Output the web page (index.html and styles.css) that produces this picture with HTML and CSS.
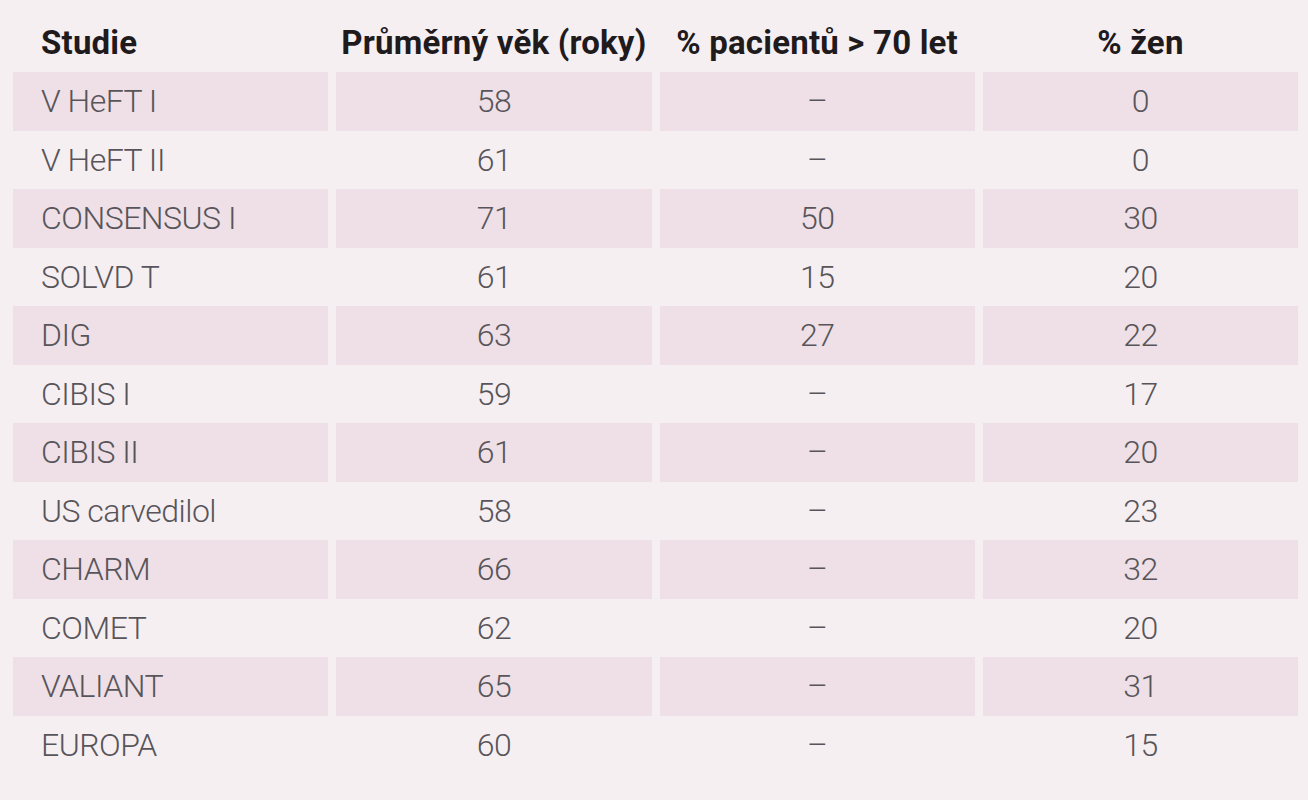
FILE: index.html
```html
<!DOCTYPE html>
<html lang="cs">
<head>
<meta charset="utf-8">
<link rel="stylesheet" href="styles.css">
</head>
<body>
<div class="table">
  <div class="row head">
    <div class="cell first">Studie</div>
    <div class="cell">Průměrný věk (roky)</div>
    <div class="cell">% pacientů &gt; 70 let</div>
    <div class="cell">% žen</div>
  </div>
  <div class="row shade"><div class="cell first">V HeFT I</div><div class="cell">58</div><div class="cell">–</div><div class="cell">0</div></div>
  <div class="row"><div class="cell first">V HeFT II</div><div class="cell">61</div><div class="cell">–</div><div class="cell">0</div></div>
  <div class="row shade"><div class="cell first">CONSENSUS I</div><div class="cell">71</div><div class="cell">50</div><div class="cell">30</div></div>
  <div class="row"><div class="cell first">SOLVD T</div><div class="cell">61</div><div class="cell">15</div><div class="cell">20</div></div>
  <div class="row shade"><div class="cell first">DIG</div><div class="cell">63</div><div class="cell">27</div><div class="cell">22</div></div>
  <div class="row"><div class="cell first">CIBIS I</div><div class="cell">59</div><div class="cell">–</div><div class="cell">17</div></div>
  <div class="row shade"><div class="cell first">CIBIS II</div><div class="cell">61</div><div class="cell">–</div><div class="cell">20</div></div>
  <div class="row"><div class="cell first">US carvedilol</div><div class="cell">58</div><div class="cell">–</div><div class="cell">23</div></div>
  <div class="row shade"><div class="cell first">CHARM</div><div class="cell">66</div><div class="cell">–</div><div class="cell">32</div></div>
  <div class="row"><div class="cell first">COMET</div><div class="cell">62</div><div class="cell">–</div><div class="cell">20</div></div>
  <div class="row shade"><div class="cell first">VALIANT</div><div class="cell">65</div><div class="cell">–</div><div class="cell">31</div></div>
  <div class="row"><div class="cell first">EUROPA</div><div class="cell">60</div><div class="cell">–</div><div class="cell">15</div></div>
</div>
</body>
</html>
```

FILE: styles.css
```css
html, body {
  margin: 0;
  padding: 0;
  background: #f6eff2;
}
body {
  width: 1308px;
  height: 800px;
  overflow: hidden;
  font-family: Roboto, "Liberation Sans", sans-serif;
}
.table {
  display: flex;
  flex-direction: column;
  padding: 0 10px 0 13px;
}
.row {
  display: grid;
  grid-template-columns: repeat(4, 1fr);
  column-gap: 8px;
  height: 58.5px;
}
.head {
  height: 72px;
}
.cell {
  display: flex;
  align-items: center;
  justify-content: center;
  font-size: 32px;
  font-weight: 300;
  color: #58555a;
  letter-spacing: -0.5px;
}
.cell.first {
  justify-content: flex-start;
  padding-left: 28px;
}
.head .cell {
  align-items: flex-start;
  padding-top: 23px;
  font-size: 33px;
  font-weight: 700;
  color: #1f1b1d;
  letter-spacing: 0.2px;
}
.shade .cell {
  background: #eee0e6;
}
```
